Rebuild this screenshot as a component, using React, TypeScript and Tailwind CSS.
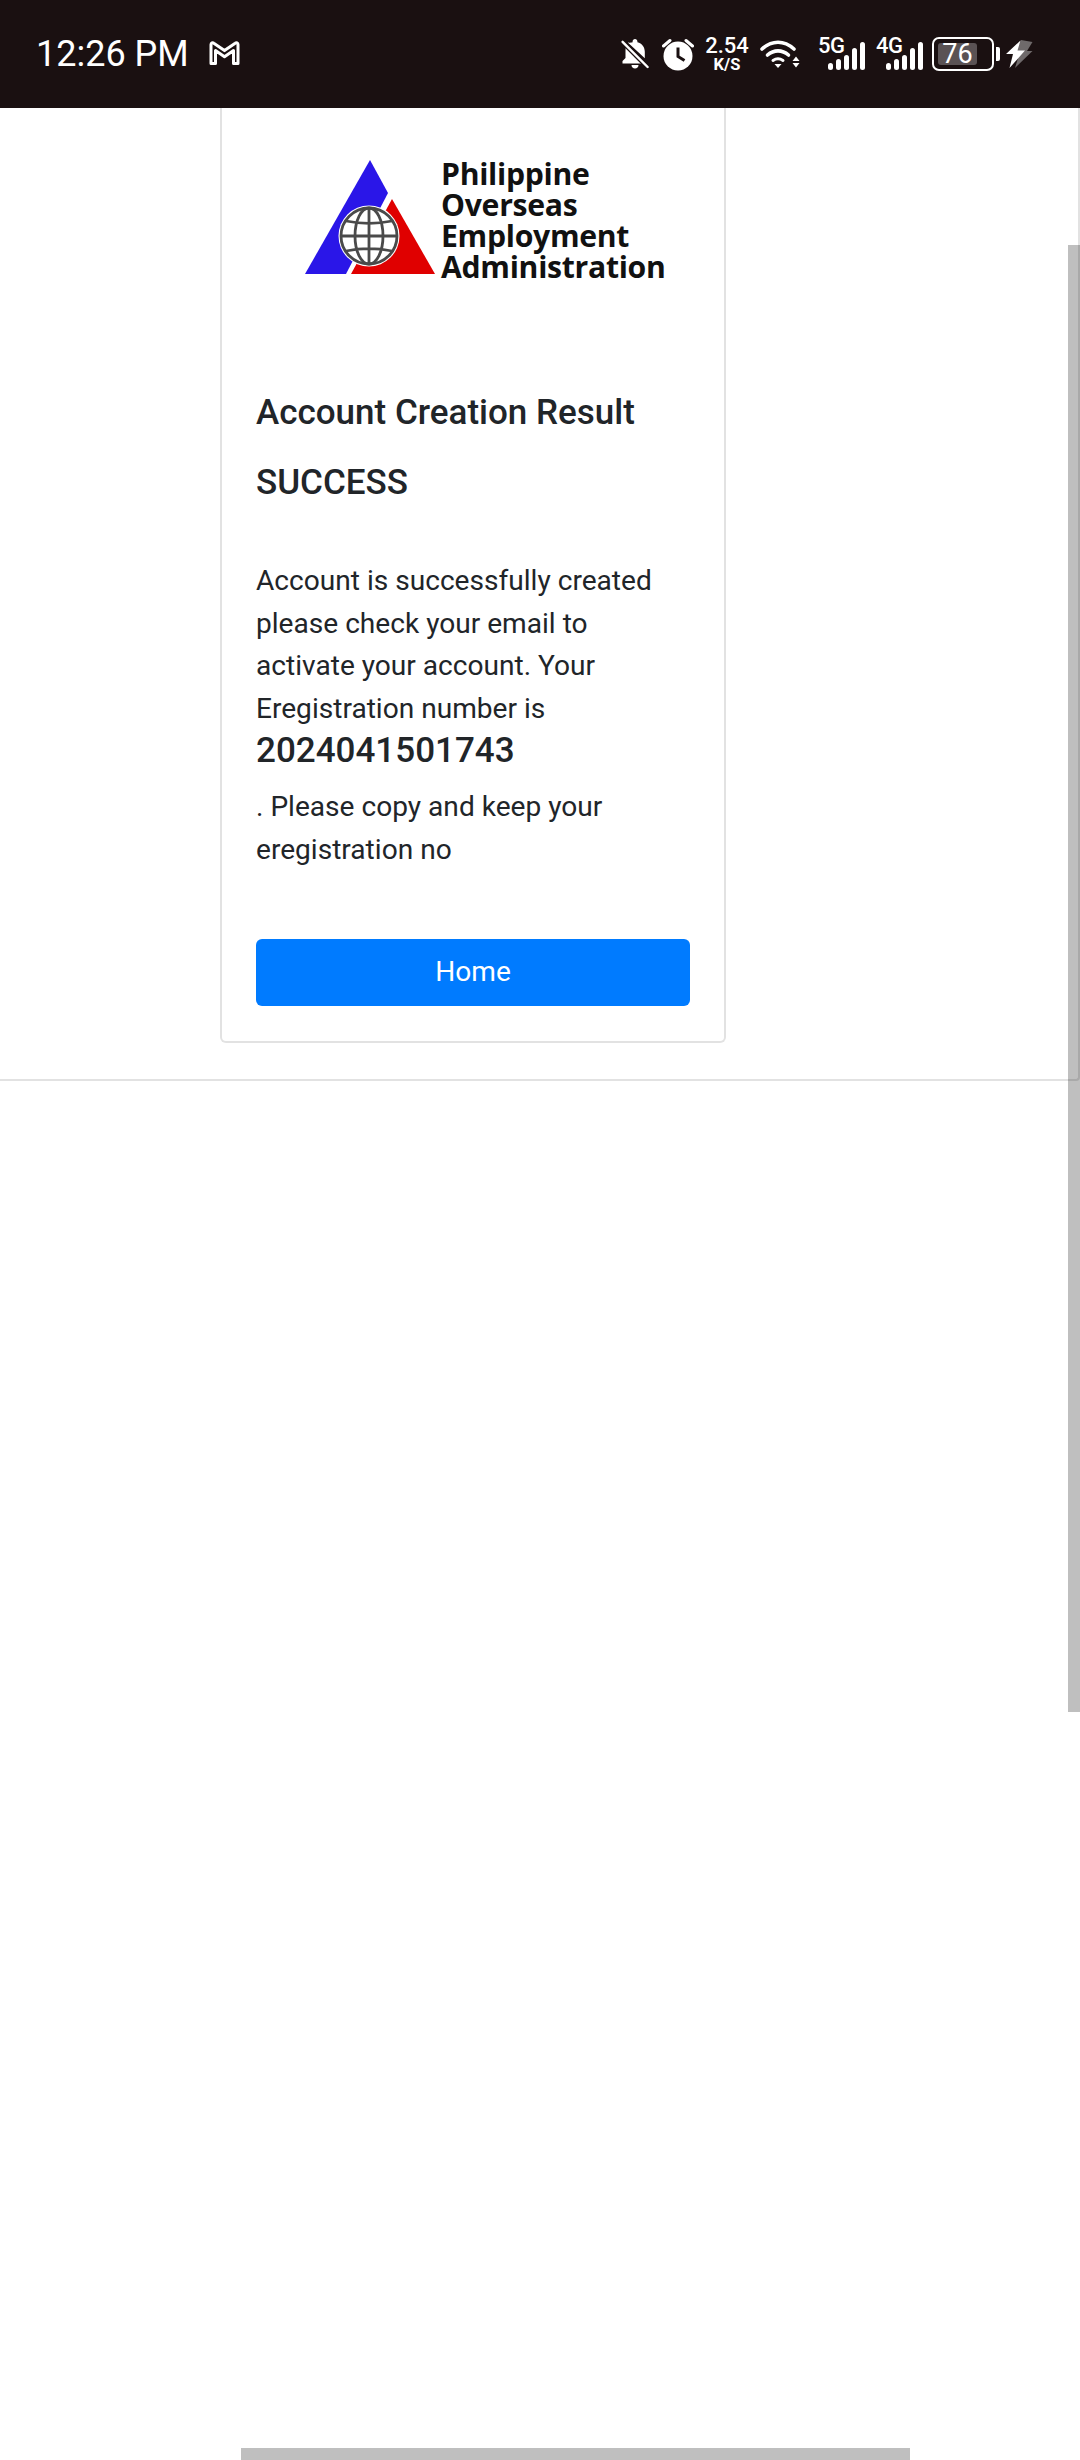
const roboto = 'font-["Roboto",sans-serif]';

function GmailIcon() {
  return (
    <svg width="31" height="24" viewBox="0 0 31 24" fill="none" stroke="#fff" strokeWidth="3" strokeLinejoin="round">
      <path d="M2 22.500V3.500C2 2 3.600 1.300 4.800 2.200L15.500 9.600L26.200 2.200C27.400 1.300 29 2 29 3.500V22.500H24.500V9.500L15.500 15.800L6.500 9.500V22.500Z" />
    </svg>
  );
}

function BellOff() {
  return (
    <svg width="28" height="32" viewBox="0 0 28 32" fill="#fff">
      <path d="M14 1c1.400 0 2.400 1 2.400 2.300v.9c4.600 1.100 7.400 5 7.400 9.600v6.400L6.800 4.600C8.300 4.900 10.400 4.500 11.600 4.200v-.9C11.600 2 12.600 1 14 1Z" />
      <path d="M4.800 8.200 21.800 25.400H1.500v-2.300l3-3v-6.300c0-1.600.1-3.200.3-5.600Z" />
      <path d="M10.500 27h7c0 2-1.500 3.500-3.500 3.500s-3.500-1.500-3.500-3.500Z" />
      <path d="M1.600 3.800 26.600 29" stroke="#1a1011" strokeWidth="5" />
      <path d="M1.600 3.800 26.600 29" stroke="#fff" strokeWidth="2.400" strokeLinecap="round" />
    </svg>
  );
}

function AlarmIcon() {
  return (
    <svg width="32" height="33" viewBox="0 0 32 33">
      <circle cx="16" cy="18" r="14.500" fill="#fff" />
      <path d="M16 9.500V18.500L22.500 22.500" fill="none" stroke="#1a1011" strokeWidth="3" />
      <path d="M1.500 8 8 2.500M30.500 8 24 2.500" stroke="#fff" strokeWidth="3" strokeLinecap="round" />
    </svg>
  );
}

function WifiIcon() {
  return (
    <svg width="40" height="30" viewBox="0 0 40 30" fill="none" stroke="#fff" strokeWidth="3.600" strokeLinecap="round">
      <path d="M2 10C12 1 24 1 34 10" />
      <path d="M7.500 16C14 10.500 22 10.500 28.500 16" />
      <path d="M13 21.500C16 19.500 20 19.500 23 21.500" strokeWidth="3" />
      <path d="M14.500 25H21.500L18 29Z" fill="#fff" stroke="none" />
      <path d="M36 17.500 39.500 22H32.500ZM32.500 24H39.500L36 28.500Z" fill="#fff" stroke="none" />
    </svg>
  );
}

// signal bars with the network label in the top corner
function Signal({ label }: { label: string }) {
  const heights = [7, 11, 15, 22, 28];
  return (
    <div className="relative w-[47px] h-[32px]">
      <span className={`absolute left-0 top-[-2px] text-[22px] leading-[20px] font-medium tracking-[-0.5px] text-white ${roboto}`}>
        {label}
      </span>
      <div className="absolute right-0 bottom-0 flex items-end gap-[3px]">
        {heights.map((h) => (
          <div key={h} className="w-[5px] rounded-[2.500px] bg-white" style={{ height: h }} />
        ))}
      </div>
    </div>
  );
}

function Battery() {
  return (
    <div className="flex items-center">
      <div className="w-[62px] h-[34px] border-2 border-white rounded-[7px] p-[4px]">
        <div className={`w-[39px] h-[22px] rounded-[3px] bg-[#5a5254] flex items-center justify-center text-[27px] leading-none text-white ${roboto}`}>
          76
        </div>
      </div>
      <div className="ml-[2px] w-[4px] h-[14px] rounded-r-[2px] bg-white" />
    </div>
  );
}

function Bolt() {
  return (
    <svg width="28" height="30" viewBox="0 0 28 30">
      <path d="M16 1 27.500 3 22 12H27.500L10 29 14 16H9Z" fill="#6f6a6b" />
      <path d="M15.500 1.500 1 15H8L4.500 29 20 11.500H12.500Z" fill="#fff" />
    </svg>
  );
}

function StatusBar() {
  return (
    <div className="h-[108px] bg-[#1a1011] flex items-center pl-[36px] pr-[47px] text-white">
      <span className={`text-[36px] leading-none ${roboto}`}>12:26 PM</span>
      <div className="ml-[20px] mt-[-2px]">
        <GmailIcon />
      </div>
      <div className="ml-auto flex items-center">
        <BellOff />
        <div className="ml-[13px]">
          <AlarmIcon />
        </div>
        <div className={`ml-[13px] w-[40px] flex flex-col items-center font-medium text-white ${roboto}`}>
          <span className="text-[22px] leading-[20px]">2.54</span>
          <span className="text-[16.500px] leading-[17px] font-bold">K/S</span>
        </div>
        <div className="ml-[13px]">
          <WifiIcon />
        </div>
        <div className="ml-[18px]">
          <Signal label="5G" />
        </div>
        <div className="ml-[11px]">
          <Signal label="4G" />
        </div>
        <div className="ml-[9px]">
          <Battery />
        </div>
        <div className="ml-[5px]">
          <Bolt />
        </div>
      </div>
    </div>
  );
}

function Logo() {
  return (
    <div className="flex items-end h-[120px] pl-[49px]">
      <svg width="132" height="116" viewBox="0 0 132 116" className="shrink-0">
        <path d="M0 115 65 1 83 34 41 115Z" fill="#2a16e8" />
        <path d="M46 115 87 40 130 115Z" fill="#e00000" />
        <circle cx="64" cy="77" r="30.500" fill="#fff" />
        <g fill="none" stroke="#4a4a4a" strokeWidth="2.800">
          <circle cx="64" cy="77" r="28" />
          <ellipse cx="64" cy="77" rx="14" ry="28" />
          <path d="M64 49V105M36 77H92M41 62C55 65 73 65 87 62M41 92C55 89 73 89 87 92" />
        </g>
      </svg>
      <div className={`ml-[4px] mb-[-7px] text-[30.200px] leading-[31px] font-bold tracking-[-0.3px] text-[#111] font-["Open_Sans",sans-serif]`}>
        <div>Philippine</div>
        <div>Overseas</div>
        <div>Employment</div>
        <div>Administration</div>
      </div>
    </div>
  );
}

export default function App() {
  return (
    <div className="relative w-[1080px] h-[2460px] overflow-hidden bg-white">
      <StatusBar />
      <main className="h-[973px] border-r-2 border-b-2 border-[#e2e2e2] rounded-br-[4px]">
        <div className={`ml-[220px] w-[506px] h-[935px] border-x-2 border-b-2 border-[#e2e2e2] rounded-b-[6px] px-[34px] text-[#212529] ${roboto}`}>
          <div className="pt-[47px]">
            <Logo />
          </div>
          <h1 className="mt-[118px] text-[35px] leading-[40px] font-medium">Account Creation Result</h1>
          <h2 className="mt-[30px] text-[35px] leading-[40px] font-medium">SUCCESS</h2>
          <p className="mt-[57px] text-[28.100px] leading-[42.500px]">
            Account is successfully created please check your email to activate your account. Your Eregistration number is
          </p>
          <p className="text-[35px] leading-[42px] font-medium">2024041501743</p>
          <p className="mt-[14px] text-[28.100px] leading-[42.500px]">. Please copy and keep your eregistration no</p>
          <button className="mt-[68px] w-full h-[67px] rounded-[6px] bg-[#007bff] text-[28.100px] text-white">Home</button>
        </div>
      </main>
      {/* overlay scrollbars */}
      <div className="absolute right-0 top-[245px] w-[12px] h-[1467px] bg-black/25" />
      <div className="absolute left-[241px] bottom-0 w-[669px] h-[12px] bg-black/25" />
    </div>
  );
}
